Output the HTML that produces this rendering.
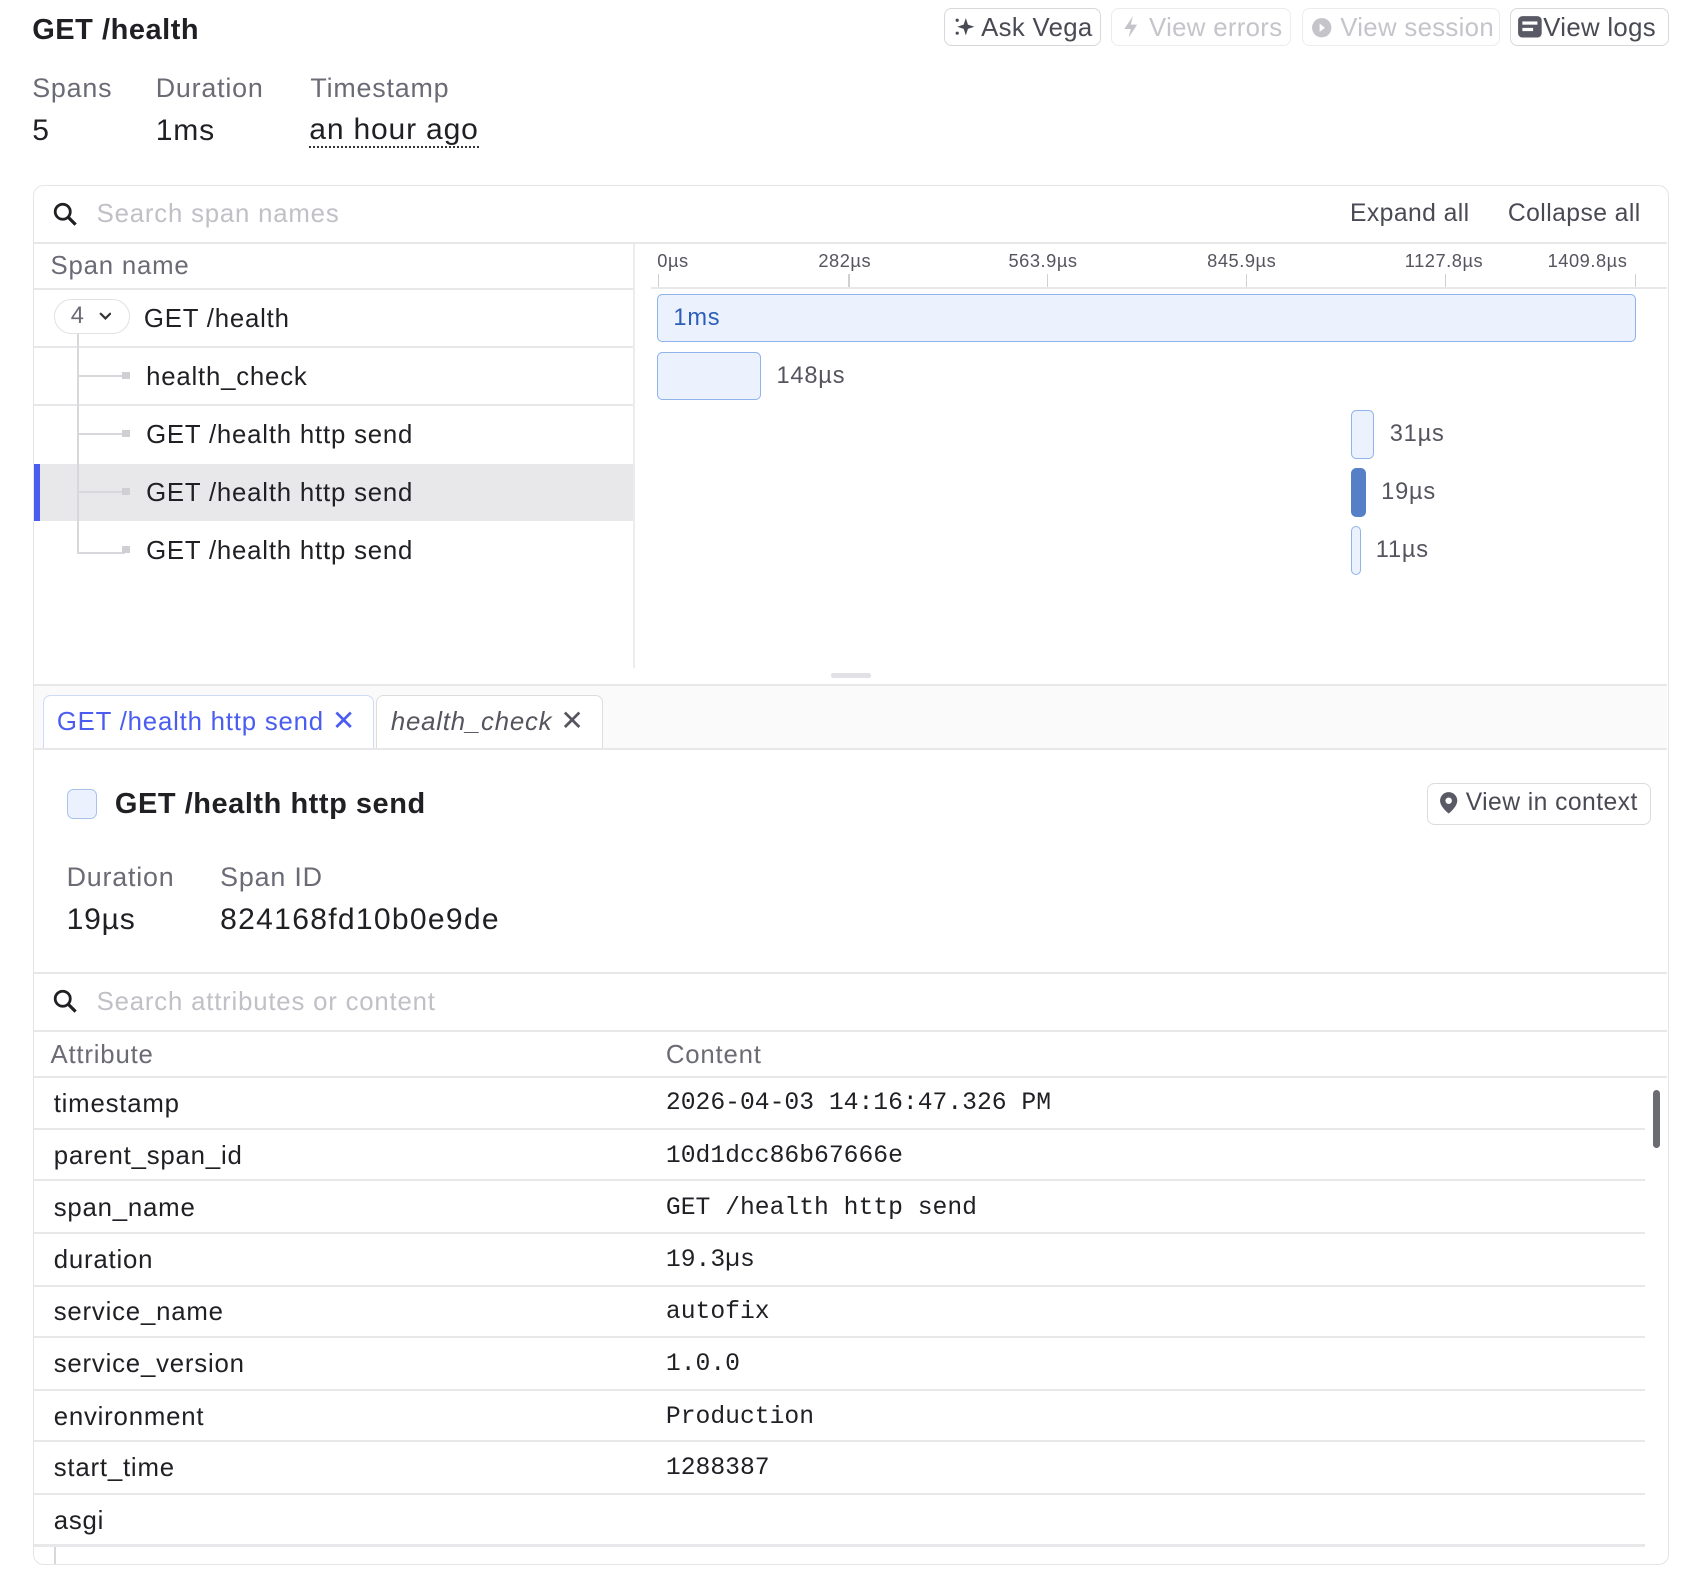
<!DOCTYPE html>
<html><head><meta charset="utf-8"><style>
html,body{margin:0;padding:0;background:#fff;overflow:hidden}
body{width:1684px;height:1582px}
#r{zoom:1.074;position:relative;width:1568px;height:1473px;font-family:"Liberation Sans",sans-serif;color:#1f1f24;letter-spacing:0.75px}
.a{position:absolute;white-space:nowrap}
.btn{position:absolute;top:7px;height:36px;border:1.5px solid #d8d8dc;border-radius:7px;font-size:24px;line-height:36px;color:#4a4a55;box-sizing:border-box;padding-left:8px;letter-spacing:0.3px}
.dis{color:#c4c4ca;border-color:#ececee}
.lbl{font-size:25px;color:#6b6b76}
.val{font-size:28px;color:#1f1f24}
.hl{position:absolute;height:2px;background:#e8e8ea}
.row{font-size:24px;color:#1f1f24}
.mono{font-family:"Liberation Mono",monospace;font-size:23px;letter-spacing:0}
.tk{position:absolute;top:255px;width:1px;height:12px;background:#d0d0d4}
.tl{font-size:17px;color:#55555f;top:233px;letter-spacing:0.5px}
</style></head><body><div id="r">
<div class="a" style="left:30px;top:13px;font-size:27px;font-weight:bold;letter-spacing:0.5px">GET /health</div>

<div class="btn" style="left:879px;width:146px"><svg width="20" height="20" viewBox="0 0 20 20" style="vertical-align:-2px"><path d="M11 2l2 6 6 2-6 2-2 6-2-6-6-2 6-2z" fill="#4a4a55"/><circle cx="3" cy="4" r="1.5" fill="#4a4a55"/><circle cx="3" cy="16" r="1.5" fill="#4a4a55"/></svg> Ask Vega</div>
<div class="btn dis" style="left:1034px;width:168px"><svg width="20" height="22" viewBox="0 0 20 22" style="vertical-align:-3px"><path d="M12 1L4 13h6l-2 8 8-12h-6z" fill="#c4c4ca"/></svg> View errors</div>
<div class="btn dis" style="left:1212px;width:185px"><svg width="20" height="20" viewBox="0 0 20 20" style="vertical-align:-3px"><circle cx="10" cy="10" r="9" fill="#c4c4ca"/><path d="M8 6l5 4-5 4z" fill="#fff"/></svg> View session</div>
<div class="btn" style="left:1406px;width:148px;padding-left:6px"><svg width="24" height="22" viewBox="0 0 24 22" style="vertical-align:-3px"><rect x="1" y="1" width="22" height="20" rx="4" fill="#5a5a66"/><rect x="5" y="6" width="14" height="3" fill="#fff"/><rect x="5" y="12" width="10" height="3" fill="#fff"/></svg>View logs</div>

<div class="a lbl" style="left:30px;top:68px">Spans</div>
<div class="a lbl" style="left:145px;top:68px">Duration</div>
<div class="a lbl" style="left:289px;top:68px">Timestamp</div>
<div class="a val" style="left:30px;top:106px">5</div>
<div class="a val" style="left:145px;top:106px">1ms</div>
<div class="a val" style="left:288px;top:106px;border-bottom:2px dotted #333;line-height:30px">an hour ago</div>

<div class="a" style="left:31px;top:172px;width:1523px;height:1285px;border:1.5px solid #e5e5e8;border-radius:10px;box-sizing:border-box"></div>
<svg class="a" style="left:48px;top:187px" width="26" height="26" viewBox="0 0 26 26"><circle cx="10" cy="10" r="7" fill="none" stroke="#1f1f24" stroke-width="2.6"/><path d="M15 15l7 7" stroke="#1f1f24" stroke-width="3"/></svg>
<div class="a" style="left:90px;top:186px;font-size:24px;color:#c0c0c6">Search span names</div>
<div class="a" style="left:1257px;top:186px;font-size:23px;color:#4a4a55;letter-spacing:0.4px">Expand all</div>
<div class="a" style="left:1404px;top:186px;font-size:23px;color:#4a4a55;letter-spacing:0.4px">Collapse all</div>
<div class="hl" style="left:32px;top:225px;width:1520px"></div>
<div class="a" style="left:589px;top:227px;width:2px;height:395px;background:#ececee"></div>
<div class="a" style="left:47px;top:235px;font-size:24px;color:#6b6b76">Span name</div>
<div class="hl" style="left:32px;top:268px;width:557px"></div>
<div class="hl" style="left:606px;top:267px;width:946px"></div>

<div class="tk" style="left:613px"></div><div class="tk" style="left:790px"></div><div class="tk" style="left:975px"></div><div class="tk" style="left:1160px"></div><div class="tk" style="left:1345px"></div><div class="tk" style="left:1522px"></div>
<div class="a tl" style="left:612px">0µs</div>
<div class="a tl" style="left:762px">282µs</div>
<div class="a tl" style="left:939px">563.9µs</div>
<div class="a tl" style="left:1124px">845.9µs</div>
<div class="a tl" style="left:1308px">1127.8µs</div>
<div class="a tl" style="left:1441px">1409.8µs</div>

<div class="a" style="left:32px;top:432px;width:557px;height:53px;background:#e8e8ea"></div>
<div class="a" style="left:32px;top:432px;width:5px;height:53px;background:#4a5df0"></div>
<div class="hl" style="left:32px;top:322px;width:557px"></div>
<div class="hl" style="left:32px;top:376px;width:557px"></div>
<div class="a" style="left:72px;top:305px;width:2px;height:210px;background:#d8d8dc"></div>
<div class="a" style="left:72px;top:514px;width:44px;height:2px;background:#d8d8dc"></div>
<div class="a" style="left:74px;top:349px;width:42px;height:2px;background:#d8d8dc"></div>
<div class="a" style="left:74px;top:403px;width:42px;height:2px;background:#d8d8dc"></div>
<div class="a" style="left:74px;top:457px;width:42px;height:2px;background:#d8d8dc"></div>
<div class="a" style="left:114px;top:346px;width:7px;height:7px;background:#d0d0d4"></div>
<div class="a" style="left:114px;top:400px;width:7px;height:7px;background:#d0d0d4"></div>
<div class="a" style="left:114px;top:454px;width:7px;height:7px;background:#d0d0d4"></div>
<div class="a" style="left:114px;top:508px;width:7px;height:7px;background:#d0d0d4"></div>
<div class="a" style="left:50px;top:278px;width:71px;height:33px;border:1.5px solid #e2e2e6;border-radius:17px;background:#fff;box-sizing:border-box;font-size:22px;color:#6b6b76;line-height:30px;padding-left:15px">4 <svg width="12" height="8" viewBox="0 0 12 8" style="margin-left:6px;vertical-align:2px"><path d="M1 1l5 5 5-5" fill="none" stroke="#333" stroke-width="2"/></svg></div>
<div class="a row" style="left:134px;top:284px">GET /health</div>
<div class="a row" style="left:136px;top:338px">health_check</div>
<div class="a row" style="left:136px;top:392px">GET /health http send</div>
<div class="a row" style="left:136px;top:446px">GET /health http send</div>
<div class="a row" style="left:136px;top:500px">GET /health http send</div>

<div class="a" style="left:612px;top:274px;width:911px;height:44px;background:#ebf2fd;border:1.5px solid #8fb3ea;border-radius:5px;box-sizing:border-box"></div>
<div class="a" style="left:627px;top:284px;font-size:22px;color:#2c5db8">1ms</div>
<div class="a" style="left:612px;top:328px;width:97px;height:44px;background:#ebf2fd;border:1.5px solid #8fb3ea;border-radius:5px;box-sizing:border-box"></div>
<div class="a" style="left:723px;top:338px;font-size:22px;color:#55555f">148µs</div>
<div class="a" style="left:1258px;top:382px;width:21px;height:45px;background:#ebf2fd;border:1.5px solid #8fb3ea;border-radius:5px;box-sizing:border-box"></div>
<div class="a" style="left:1294px;top:392px;font-size:22px;color:#55555f">31µs</div>
<div class="a" style="left:1258px;top:436px;width:14px;height:45px;background:#5580c8;border-radius:5px"></div>
<div class="a" style="left:1286px;top:446px;font-size:22px;color:#55555f">19µs</div>
<div class="a" style="left:1258px;top:490px;width:9px;height:45px;background:#ebf2fd;border:1.5px solid #8fb3ea;border-radius:5px;box-sizing:border-box"></div>
<div class="a" style="left:1281px;top:500px;font-size:22px;color:#55555f">11µs</div>

<div class="a" style="left:774px;top:627px;width:37px;height:4px;background:#e2e2e6;border-radius:2px"></div>
<div class="a" style="left:32px;top:637px;width:1520px;height:58px;background:#fafafa;border-top:2px solid #e8e8ea;border-bottom:2px solid #e8e8ea"></div>
<div class="a" style="left:40px;top:647px;width:308px;height:49px;background:#fff;border:1.5px solid #cfdaf8;border-bottom:none;border-radius:7px 7px 0 0;box-sizing:border-box;font-size:24px;color:#4a5df0;padding:8px 0 0 12px">GET /health http send <span style="font-size:26px">✕</span></div>
<div class="a" style="left:350px;top:647px;width:211px;height:49px;background:#fff;border:1.5px solid #ddd;border-bottom:none;border-radius:7px 7px 0 0;box-sizing:border-box;font-size:24px;color:#55555f;padding:8px 0 0 13px"><i>health_check</i> <span style="font-size:26px">✕</span></div>

<div class="a" style="left:62px;top:735px;width:28px;height:28px;border:1.5px solid #a9c3ee;background:#ebf2fd;border-radius:6px;box-sizing:border-box"></div>
<div class="a" style="left:107px;top:734px;font-size:27px;font-weight:bold;letter-spacing:0.5px">GET /health http send</div>
<div class="a" style="left:1329px;top:729px;width:208px;height:39px;border:1.5px solid #dcdce0;border-radius:7px;box-sizing:border-box;font-size:23px;color:#4a4a55;line-height:36px;padding-left:10px;letter-spacing:0.4px"><svg width="18" height="22" viewBox="0 0 18 22" style="vertical-align:-4px"><path d="M9 1a8 8 0 0 0-8 8c0 6 8 12 8 12s8-6 8-12a8 8 0 0 0-8-8z" fill="#5a5a66"/><circle cx="9" cy="9" r="3" fill="#fff"/></svg> View in context</div>

<div class="a lbl" style="left:62px;top:803px">Duration</div>
<div class="a lbl" style="left:205px;top:803px">Span ID</div>
<div class="a val" style="left:62px;top:841px">19µs</div>
<div class="a val" style="left:205px;top:841px;letter-spacing:1.2px">824168fd10b0e9de</div>

<div class="hl" style="left:32px;top:905px;width:1520px"></div>
<svg class="a" style="left:48px;top:920px" width="26" height="26" viewBox="0 0 26 26"><circle cx="10" cy="10" r="7" fill="none" stroke="#1f1f24" stroke-width="2.6"/><path d="M15 15l7 7" stroke="#1f1f24" stroke-width="3"/></svg>
<div class="a" style="left:90px;top:920px;font-size:24px;color:#c0c0c6">Search attributes or content</div>
<div class="hl" style="left:32px;top:959px;width:1520px"></div>
<div class="a" style="left:47px;top:969px;font-size:24px;color:#6b6b76">Attribute</div>
<div class="a" style="left:620px;top:969px;font-size:24px;color:#6b6b76">Content</div>
<div class="hl" style="left:32px;top:1002px;width:1520px"></div>

<div class="a row" style="left:50px;top:1015px">timestamp</div><div class="a mono" style="left:620px;top:1014px">2026-04-03 14:16:47.326 PM</div>
<div class="hl" style="left:32px;top:1050px;width:1500px"></div>
<div class="a row" style="left:50px;top:1063px">parent_span_id</div><div class="a mono" style="left:620px;top:1063px">10d1dcc86b67666e</div>
<div class="hl" style="left:32px;top:1098px;width:1500px"></div>
<div class="a row" style="left:50px;top:1112px">span_name</div><div class="a mono" style="left:620px;top:1112px">GET /health http send</div>
<div class="hl" style="left:32px;top:1147px;width:1500px"></div>
<div class="a row" style="left:50px;top:1160px">duration</div><div class="a mono" style="left:620px;top:1160px">19.3µs</div>
<div class="hl" style="left:32px;top:1196px;width:1500px"></div>
<div class="a row" style="left:50px;top:1209px">service_name</div><div class="a mono" style="left:620px;top:1209px">autofix</div>
<div class="hl" style="left:32px;top:1244px;width:1500px"></div>
<div class="a row" style="left:50px;top:1257px">service_version</div><div class="a mono" style="left:620px;top:1257px">1.0.0</div>
<div class="hl" style="left:32px;top:1293px;width:1500px"></div>
<div class="a row" style="left:50px;top:1306px">environment</div><div class="a mono" style="left:620px;top:1306px">Production</div>
<div class="hl" style="left:32px;top:1341px;width:1500px"></div>
<div class="a row" style="left:50px;top:1354px">start_time</div><div class="a mono" style="left:620px;top:1354px">1288387</div>
<div class="hl" style="left:32px;top:1390px;width:1500px"></div>
<div class="a row" style="left:50px;top:1403px">asgi</div>
<div class="hl" style="left:32px;top:1438px;width:1500px"></div>
<div class="a" style="left:50px;top:1440px;width:2px;height:16px;background:#d8d8dc"></div>
<div class="a" style="left:1539px;top:1015px;width:7px;height:54px;background:#6b6b72;border-radius:4px"></div>
</div></body></html>
